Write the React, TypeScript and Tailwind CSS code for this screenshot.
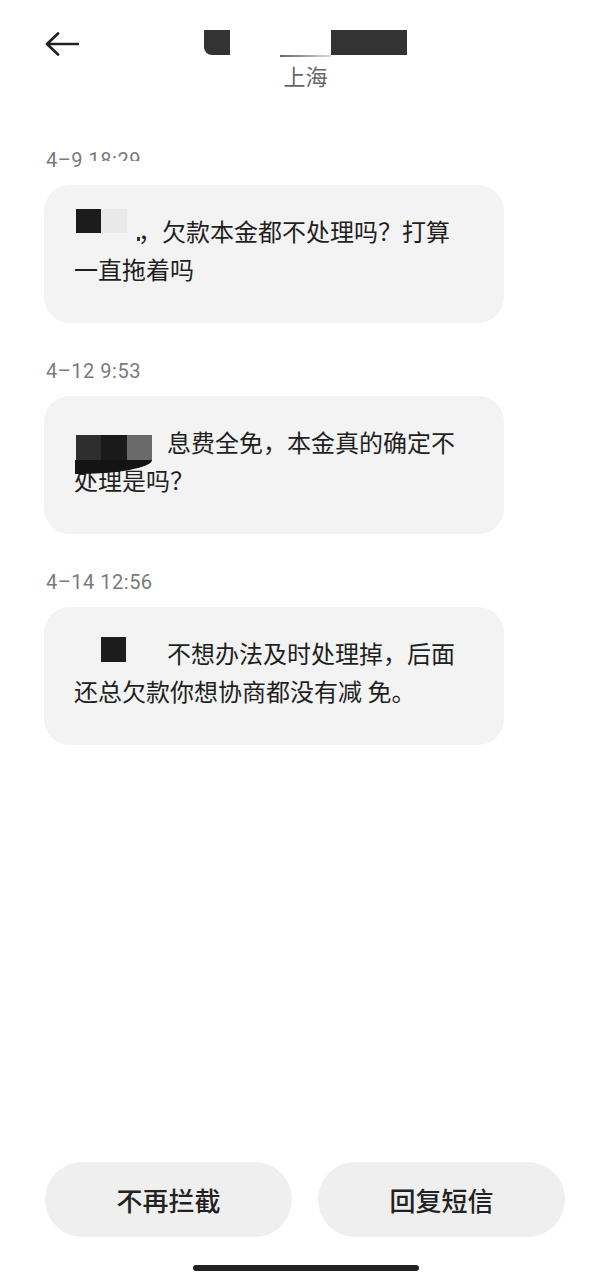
import React from "react";

function BackArrow() {
  return (
    <svg width="34" height="24" viewBox="0 0 34 24" fill="none">
      <path
        d="M13 1.5 L2 12 L13 22.5 M2 12 H33"
        stroke="#222"
        strokeWidth="2.6"
        strokeLinecap="round"
        strokeLinejoin="round"
      />
    </svg>
  );
}

function Timestamp({ children }: { children: React.ReactNode }) {
  return (
    <div className="pl-[2px] font-['Roboto',sans-serif] text-[20px] leading-[28px] tracking-[0.5px] text-[#7a7a7a]">
      {children}
    </div>
  );
}

function Bubble({ children }: { children: React.ReactNode }) {
  return (
    <div className="mt-[11px] w-[460px] rounded-[26px] bg-[#f3f3f3] pl-[30px] pt-[27px] pb-[35px] text-[24px] leading-[38px] text-[#1f1f1f] whitespace-nowrap">
      {children}
    </div>
  );
}

export default function App() {
  return (
    <div className="flex h-[1280px] w-full flex-col overflow-hidden bg-white font-['Noto_Sans_CJK_SC','Noto_Sans',sans-serif]">
      <header className="grid grid-cols-[1fr_auto_1fr] pt-[30px]">
        <div className="pl-[45px] pt-[2px]">
          <BackArrow />
        </div>
        <div className="flex flex-col items-center">
          <div className="flex h-[25px] items-end">
            <div className="h-[25px] w-[26px] rounded-bl-[8px] bg-[#333]" />
            <div className="flex h-[25px] w-[101px] items-end">
              <div className="mb-[-2px] ml-[50px] h-[2px] w-[52px] bg-gradient-to-r from-[#666] to-[#ddd]" />
            </div>
            <div className="h-[25px] w-[76px] bg-[#333]" />
          </div>
          <div className="mt-[6px] text-[22px] leading-[28px] text-[#666]">上海</div>
        </div>
        <div />
      </header>

      <main className="mt-[57px] flex flex-col px-[44px]">
        <Timestamp>
          4–9{" "}
          <span className="inline-block h-[15px] overflow-hidden align-top">18:29</span>
        </Timestamp>
        <Bubble>
          <span className="relative -top-[3px] inline-block h-[24px] w-[64px] align-top">
            <span className="flex h-full pl-[2px]">
              <span className="w-[25px] bg-[#1c1c1c]" />
              <span className="w-[26px] bg-[#e9e9e9]" />
            </span>
            <span className="absolute left-[63px] top-[28px] h-[4px] w-[3px] bg-[#333]" />
          </span>
          ，欠款本金都不处理吗？打算
          <br />
          一直拖着吗
        </Bubble>

        <div className="mt-[34px]">
          <Timestamp>4–12 9:53</Timestamp>
        </div>
        <Bubble>
          <span className="relative top-[12px] inline-block h-[25px] w-[93px] align-top">
            <span className="flex h-full pl-[2px]">
              <span className="w-[25px] bg-[#2e2e2e]" />
              <span className="w-[26px] bg-[#1a1a1a]" />
              <span className="w-[25px] bg-[#6a6a6a]" />
            </span>
            <span className="absolute left-[1px] top-[25px] h-[14px] w-[77px] rounded-br-[77px_14px] bg-[#141414]" />
          </span>
          息费全免，本金真的确定不
          <br />
          处理是吗？
        </Bubble>

        <div className="mt-[34px]">
          <Timestamp>4–14 12:56</Timestamp>
        </div>
        <Bubble>
          <span className="relative top-[3px] inline-block h-[25px] w-[93px] align-top">
            <span className="ml-[27px] block h-full w-[25px] bg-[#1c1c1c]" />
          </span>
          不想办法及时处理掉，后面
          <br />
          还总欠款你想协商都没有减 免。
        </Bubble>
      </main>

      <div className="flex-1" />

      <footer className="flex flex-col">
        <div className="flex gap-[26px] pl-[45px] pr-[46px]">
          <button className="h-[75px] flex-1 rounded-full bg-[#efefef] text-[26px] font-medium text-[#222]">
            不再拦截
          </button>
          <button className="h-[75px] flex-1 rounded-full bg-[#efefef] text-[26px] font-medium text-[#222]">
            回复短信
          </button>
        </div>
        <div className="mx-auto mt-[28px] mb-[9px] h-[6px] w-[226px] rounded-full bg-[#222]" />
      </footer>
    </div>
  );
}
